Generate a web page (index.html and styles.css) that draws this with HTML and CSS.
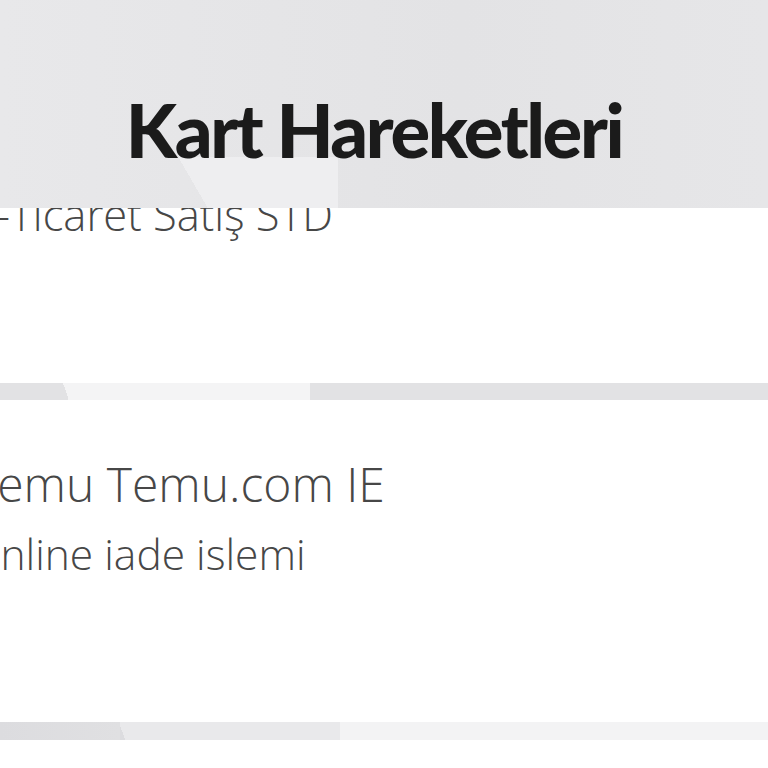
FILE: index.html
```html
<!DOCTYPE html>
<html lang="tr">
<head>
<meta charset="utf-8">
<link rel="stylesheet" href="styles.css">
</head>
<body>
<header class="top">
  <h1 class="title">Kart Hareketleri</h1>
</header>
<section class="card card-first">
  <div class="card-body">
    <p class="sub sub-first">E-Ticaret Satış STD</p>
  </div>
</section>
<div class="strip strip-one"></div>
<section class="card card-second">
  <div class="card-body">
    <p class="merchant">Temu Temu.com IE</p>
    <p class="sub sub-second">Online iade islemi</p>
  </div>
</section>
<div class="strip strip-two"></div>
<div class="rest"></div>
</body>
</html>
```

FILE: styles.css
```css
html, body {
  margin: 0;
  padding: 0;
  background: #ffffff;
  overflow: hidden;
}
body {
  width: 768px;
  height: 768px;
  font-family: "Open Sans", "Liberation Sans", sans-serif;
}
.top {
  height: 208px;
  display: flex;
  align-items: flex-start;
  justify-content: center;
  background-color: #e6e6e8;
  background-image:
    linear-gradient(60deg, transparent 50%, #eeeef0 50%),
    linear-gradient(#eeeef0, #eeeef0),
    linear-gradient(90deg, #e8e8ea, #e3e3e5 60%, #e6e6e8);
  background-repeat: no-repeat;
  background-position: 173px 157px, 212px 157px, 0 0;
  background-size: 40px 51px, 126px 51px, 100% 100%;
}
.title {
  margin: 86px 20px 0 0;
  font-family: "Lato", "Liberation Sans", sans-serif;
  font-weight: 900;
  font-size: 74px;
  line-height: 88px;
  color: #1b1b1b;
  letter-spacing: -2.4px;
}
.card {
  overflow: hidden;
  background: #ffffff;
}
.card-first {
  height: 175px;
}
.card-second {
  height: 322px;
}
.card-body {
  margin-left: -28px;
}
.sub, .merchant {
  margin: 0;
  white-space: nowrap;
  color: #474747;
  font-weight: 300;
}
.sub {
  font-size: 42.5px;
  line-height: 56px;
}
.sub-first {
  font-size: 43.5px;
  margin-top: -21px;
}
.sub-second {
  margin-top: 10px;
  margin-left: -4px;
}
.merchant {
  font-size: 48px;
  line-height: 64px;
  margin-top: 52px;
}
.strip {
  background-repeat: no-repeat;
}
.strip-one {
  height: 17px;
  background-color: #e2e2e4;
  background-image:
    linear-gradient(70deg, transparent 50%, #f4f4f5 50%),
    linear-gradient(#f4f4f5, #f4f4f5);
  background-position: 62px 0, 68px 0;
  background-size: 8px 17px, 242px 17px;
}
.strip-two {
  height: 18px;
  background-color: #f3f3f4;
  background-image:
    linear-gradient(90deg, #dcdcdf, #e0e0e2),
    linear-gradient(70deg, #dcdcdf 50%, #e9e9eb 50%),
    linear-gradient(#e9e9eb, #e9e9eb);
  background-position: 0 0, 118px 0, 126px 0;
  background-size: 120px 18px, 8px 18px, 214px 18px;
}
.rest {
  height: 28px;
}
```
